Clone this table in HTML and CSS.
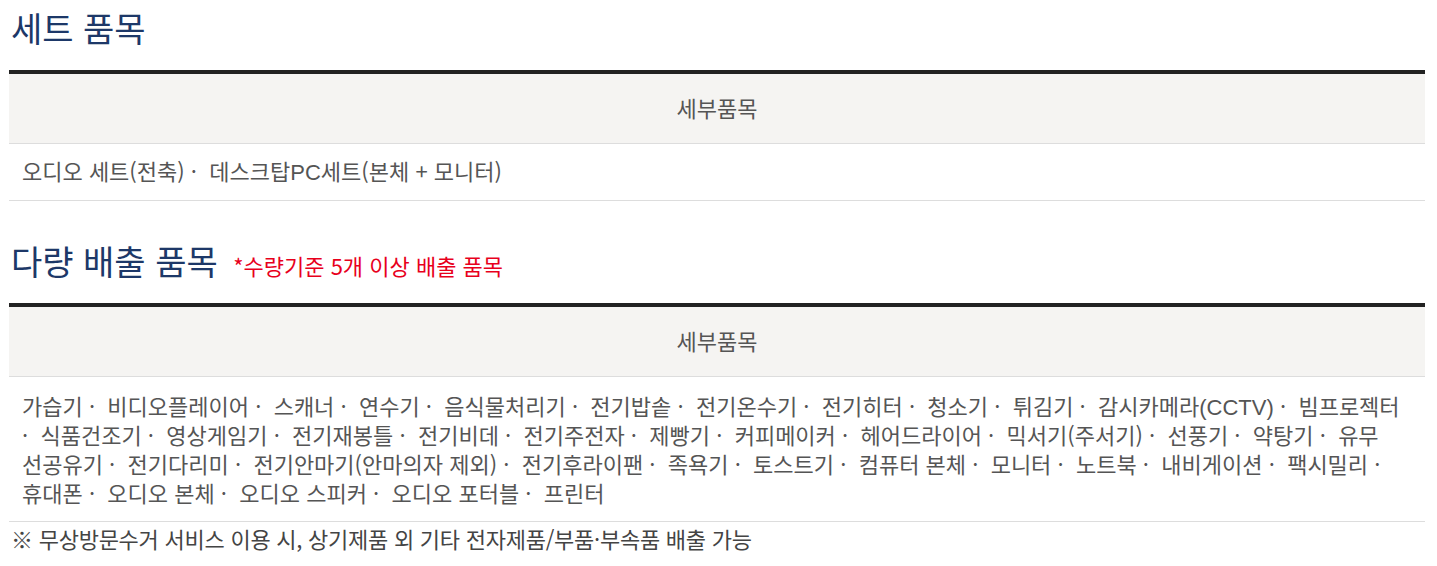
FILE: index.html
```html
<!DOCTYPE html>
<html lang="ko">
<head>
<meta charset="utf-8">
<link rel="stylesheet" href="styles.css">
</head>
<body>
<div class="wrap">
  <h2 class="title">세트 품목</h2>
  <div class="tbl">
    <div class="th">세부품목</div>
    <div class="td">오디오 세트(전축) ·&nbsp; 데스크탑<span class="en">PC</span>세트(본체 + 모니터)</div>
  </div>

  <h2 class="title title2">다량 배출 품목 <span class="note">*수량기준 5개 이상 배출 품목</span></h2>
  <div class="tbl">
    <div class="th">세부품목</div>
    <div class="td many">가습기 ·&nbsp; 비디오플레이어 ·&nbsp; 스캐너 ·&nbsp; 연수기 ·&nbsp; 음식물처리기 ·&nbsp; 전기밥솥 ·&nbsp; 전기온수기 ·&nbsp; 전기히터 ·&nbsp; 청소기 ·&nbsp; 튀김기 ·&nbsp; 감시카메라<span class="en">(CCTV)</span> ·&nbsp; 빔프로젝터<br>·&nbsp; 식품건조기 ·&nbsp; 영상게임기 ·&nbsp; 전기재봉틀 ·&nbsp; 전기비데 ·&nbsp; 전기주전자 ·&nbsp; 제빵기 ·&nbsp; 커피메이커 ·&nbsp; 헤어드라이어 ·&nbsp; 믹서기(주서기) ·&nbsp; 선풍기 ·&nbsp; 약탕기 ·&nbsp; 유무<br>선공유기 ·&nbsp; 전기다리미 ·&nbsp; 전기안마기(안마의자 제외) ·&nbsp; 전기후라이팬 ·&nbsp; 족욕기 ·&nbsp; 토스트기 ·&nbsp; 컴퓨터 본체 ·&nbsp; 모니터 ·&nbsp; 노트북 ·&nbsp; 내비게이션 ·&nbsp; 팩시밀리 ·<br>휴대폰 ·&nbsp; 오디오 본체 ·&nbsp; 오디오 스피커 ·&nbsp; 오디오 포터블 ·&nbsp; 프린터</div>
  </div>
  <p class="foot">※ 무상방문수거 서비스 이용 시, 상기제품 외 기타 전자제품/부품·부속품 배출 가능</p>
</div>
</body>
</html>
```

FILE: styles.css
```css
* { box-sizing: border-box; }
body {
  margin: 0;
  background: #fff;
  font-family: "Noto Sans CJK KR", "Malgun Gothic", sans-serif;
  color: #444;
}
.wrap {
  width: 1416px;
  margin-left: 9px;
  padding-top: 6px;
}
.title {
  margin: 0 0 20px 2px;
  height: 44px;
  font-size: 34px;
  font-weight: 400;
  line-height: 44px;
  color: #1d3868;
  white-space: nowrap;
}
.title2 {
  margin-top: 38px;
}
.note {
  font-size: 22px;
  line-height: 1;
  color: #e8001c;
  margin-left: 6px;
}
.tbl {
  border-top: 4px solid #222;
}
.th {
  background: #f5f4f2;
  font-size: 22px;
  color: #555;
  height: 70px;
  line-height: 67px;
  padding-bottom: 2px;
  text-align: center;
  border-bottom: 1px solid #ddd;
}
.td {
  font-size: 22px;
  color: #555;
  padding: 13px 13px 16px;
  line-height: 27px;
  border-bottom: 1px solid #ddd;
}
.many {
  padding: 14px 13px;
  line-height: 29px;
  white-space: nowrap;
}
.en {
  font-family: "Liberation Sans", Arial, sans-serif;
  line-height: 1;
}
.foot {
  margin: 2px 0 0 2px;
  font-size: 22px;
  color: #444;
  line-height: 28px;
  letter-spacing: -0.25px;
}
```
